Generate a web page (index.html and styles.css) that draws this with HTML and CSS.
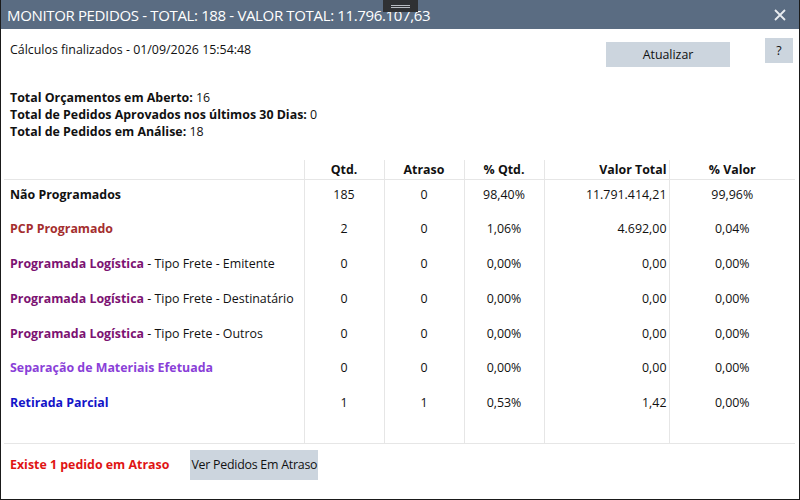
FILE: index.html
```html
<!DOCTYPE html>
<html lang="pt-BR">
<head>
<meta charset="utf-8">
<title>Monitor Pedidos</title>
<link rel="stylesheet" href="styles.css">
</head>
<body>
<div class="window">
  <div class="titlebar">
    <span class="title">MONITOR PEDIDOS - TOTAL: 188 - VALOR TOTAL: 11.796.107,63</span>
    <span class="close">
      <svg width="12" height="12" viewBox="0 0 12 12"><path d="M1 1 L11 11 M11 1 L1 11" stroke="#e8ecf0" stroke-width="1.8" fill="none"/></svg>
    </span>
    <span class="grip"><span class="grip-line"></span><span class="grip-line"></span></span>
  </div>
  <div class="toolbar">
    <span class="status">Cálculos finalizados - 01/09/2026 15:54:48</span>
    <span class="btn btn-update">Atualizar</span>
    <span class="btn btn-help">?</span>
  </div>
  <div class="summary">
    <div><b>Total Orçamentos em Aberto:</b> 16</div>
    <div><b>Total de Pedidos Aprovados nos últimos 30 Dias:</b> 0</div>
    <div><b>Total de Pedidos em Análise:</b> 18</div>
  </div>
  <table class="grid">
    <colgroup>
      <col class="c-label"><col class="c-num"><col class="c-num"><col class="c-num"><col class="c-val"><col class="c-pv">
    </colgroup>
    <thead>
      <tr><th></th><th>Qtd.</th><th>Atraso</th><th>% Qtd.</th><th class="r">Valor Total</th><th>% Valor</th></tr>
    </thead>
    <tbody>
      <tr><td><b class="k-black">Não Programados</b></td><td>185</td><td>0</td><td>98,40%</td><td class="r">11.791.414,21</td><td>99,96%</td></tr>
      <tr><td><b class="k-red">PCP Programado</b></td><td>2</td><td>0</td><td>1,06%</td><td class="r">4.692,00</td><td>0,04%</td></tr>
      <tr><td><b class="k-purple">Programada Logística</b> - Tipo Frete - Emitente</td><td>0</td><td>0</td><td>0,00%</td><td class="r">0,00</td><td>0,00%</td></tr>
      <tr><td><b class="k-purple">Programada Logística</b> - Tipo Frete - Destinatário</td><td>0</td><td>0</td><td>0,00%</td><td class="r">0,00</td><td>0,00%</td></tr>
      <tr><td><b class="k-purple">Programada Logística</b> - Tipo Frete - Outros</td><td>0</td><td>0</td><td>0,00%</td><td class="r">0,00</td><td>0,00%</td></tr>
      <tr><td><b class="k-violet">Separação de Materiais Efetuada</b></td><td>0</td><td>0</td><td>0,00%</td><td class="r">0,00</td><td>0,00%</td></tr>
      <tr><td><b class="k-blue">Retirada Parcial</b></td><td>1</td><td>1</td><td>0,53%</td><td class="r">1,42</td><td>0,00%</td></tr>
      <tr class="filler"><td></td><td></td><td></td><td></td><td></td><td></td></tr>
    </tbody>
  </table>
  <div class="footer">
    <b class="alert">Existe 1 pedido em Atraso</b>
    <span class="btn btn-late">Ver Pedidos Em Atraso</span>
  </div>
</div>
</body>
</html>
```
FILE: styles.css
```css
* { box-sizing: border-box; }
html, body { margin: 0; padding: 0; background: #fff; }
body { font-family: "Open Sans", "Noto Sans", sans-serif; font-size: 12.4px; color: #111; }

.window {
  width: 800px;
  height: 500px;
  border: 1px solid #1a1a1a;
  border-top: none;
  position: relative;
  overflow: hidden;
}

.titlebar {
  height: 29px;
  background: #5a6c82;
  display: flex;
  align-items: center;
  justify-content: space-between;
  padding: 0 13px 0 6px;
  position: relative;
}
.title { color: #fff; font-size: 15px; letter-spacing: -0.35px; font-weight: 400; }
.close { display: flex; }
.grip {
  position: absolute;
  left: 382px;
  top: 0;
  width: 35px;
  height: 12px;
  background: #2f3134;
  display: flex;
  flex-direction: column;
  align-items: center;
  padding-top: 5px;
  gap: 1px;
}
.grip-line { width: 19px; height: 1px; background: #b8bcc2; }

.toolbar {
  height: 60px;
  display: flex;
  align-items: flex-start;
  padding: 9px 6px 0 9px;
}
.status { margin-top: 4px; line-height: 16px; flex: 1; }
.btn {
  background: #ccd5de;
  display: flex;
  align-items: center;
  justify-content: center;
  color: #111;
  white-space: nowrap;
}
.btn-update { width: 124px; height: 25px; margin-top: 4px; }
.btn-help { width: 28px; height: 25px; margin-left: 35px; }

.summary { padding-left: 9px; line-height: 17px; height: 51px; }
.summary b { font-weight: 700; }

.grid {
  margin: 20px 0 0 3px;
  width: 791px;
  border-collapse: collapse;
  table-layout: fixed;
  border-bottom: 1px solid #e6e6e6;
}
.c-label { width: 300px; }
.c-num { width: 80px; }
.c-val { width: 125px; }
.c-pv { width: 126px; }

.grid th, .grid td {
  padding: 0;
  text-align: center;
  font-weight: 400;
  border-left: 1px solid #e6e6e6;
  white-space: nowrap;
}
.grid th:first-child, .grid td:first-child {
  border-left: none;
  text-align: left;
  padding-left: 6px;
}
.grid th { font-weight: 700; height: 19px; line-height: 19px; border-bottom: 1px solid #e6e6e6; }
.grid td { height: 34.8px; vertical-align: top; padding-top: 7px; line-height: 16px; }
.grid .r { text-align: right; padding-right: 2px; }
.grid tr.filler td { height: 20px; padding-top: 0; }

.k-black { color: #111; }
.k-red { color: #a42e2e; }
.k-purple { color: #7c1272; }
.k-violet { color: #8a3fd8; }
.k-blue { color: #1414c8; }

.footer {
  display: flex;
  align-items: center;
  padding: 6px 0 0 9px;
}
.alert { color: #e01414; font-weight: 700; }
.btn-late { width: 128px; height: 30px; margin-left: 21px; letter-spacing: -0.25px; }
```
